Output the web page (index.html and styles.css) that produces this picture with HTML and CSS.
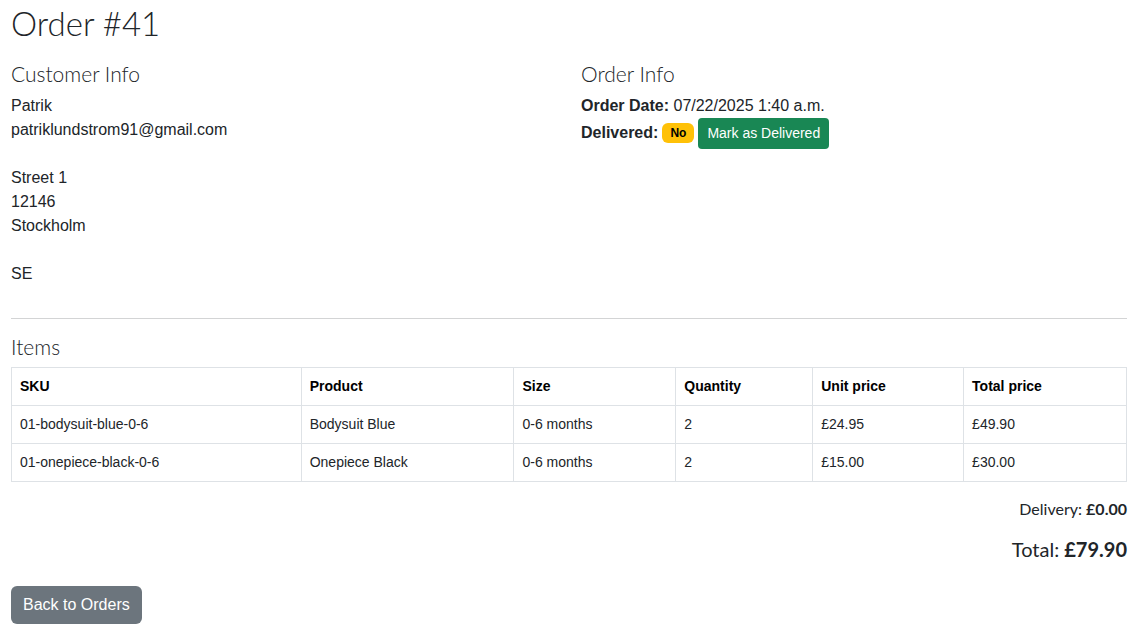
FILE: index.html
```html
<!DOCTYPE html>
<html lang="en">
<head>
<meta charset="utf-8">
<title>Order #41</title>
<link rel="stylesheet" href="styles.css">
</head>
<body>
<main class="page">
  <h1 class="title">Order #41</h1>
  <div class="info-row">
    <section class="info-col">
      <h4 class="sub">Customer Info</h4>
      <p class="block">Patrik<br>patriklundstrom91@gmail.com<br><br>Street 1<br>12146<br>Stockholm<br><br>SE</p>
    </section>
    <section class="info-col">
      <h4 class="sub">Order Info</h4>
      <p class="line"><strong>Order Date:</strong> 07/22/2025 1:40 a.m.</p>
      <p class="line delivered"><strong>Delivered:</strong> <span class="badge">No</span><button class="btn btn-green">Mark as Delivered</button></p>
    </section>
  </div>
  <hr class="rule">
  <h4 class="sub items">Items</h4>
  <table class="items-table">
    <thead>
      <tr><th class="c1">SKU</th><th class="c2">Product</th><th class="c3">Size</th><th class="c4">Quantity</th><th class="c5">Unit price</th><th class="c6">Total price</th></tr>
    </thead>
    <tbody>
      <tr><td>01-bodysuit-blue-0-6</td><td>Bodysuit Blue</td><td>0-6 months</td><td>2</td><td>£24.95</td><td>£49.90</td></tr>
      <tr><td>01-onepiece-black-0-6</td><td>Onepiece Black</td><td>0-6 months</td><td>2</td><td>£15.00</td><td>£30.00</td></tr>
    </tbody>
  </table>
  <p class="delivery">Delivery: <strong>£0.00</strong></p>
  <p class="total">Total: <strong>£79.90</strong></p>
  <button class="btn btn-grey">Back to Orders</button>
</main>
</body>
</html>
```
FILE: styles.css
```css
* { box-sizing: border-box; }
html, body { margin: 0; padding: 0; background: #fff; }
body {
  font-family: "Liberation Sans", Arial, sans-serif;
  font-size: 16px;
  line-height: 1.5;
  color: #212529;
}
.page { padding: 0 6px 0 11px; }
.title {
  font-family: "Lato", "Noto Sans", sans-serif;
  font-weight: 300;
  font-size: 33px;
  line-height: 46px;
  margin: 0 0 13px;
}
.sub {
  font-family: "Lato", "Noto Sans", sans-serif;
  font-weight: 300;
  font-size: 21px;
  line-height: 29px;
  margin: 0 0 6px;
}
.info-row { display: grid; grid-template-columns: 570px 1fr; }
.block { margin: 0 0 16px; }
.line { margin: 0; }
.delivered { display: flex; align-items: center; height: 30px; line-height: 30px; }
.delivered strong { margin-right: 4px; }
.badge {
  display: inline-block;
  background: #ffc107;
  color: #000;
  font-weight: 700;
  font-size: 12px;
  line-height: 20px;
  height: 20px;
  padding: 0 8px;
  border-radius: 6px;
  margin-right: 4px;
}
.btn {
  font-family: "Liberation Sans", Arial, sans-serif;
  border: 0;
  color: #fff;
  cursor: pointer;
}
.btn-green {
  background: #198754;
  font-size: 14px;
  line-height: 21px;
  padding: 5px 9px;
  border-radius: 4px;
}
.rule {
  border: 0;
  border-top: 1px solid #d3d4d5;
  margin: 16px 0 13px;
}
.items { margin-bottom: 6px; }
.items-table {
  width: 1116px;
  border-collapse: collapse;
  font-size: 14px;
  line-height: 21px;
  margin-bottom: 15px;
}
.items-table th, .items-table td {
  border: 1px solid #dee2e6;
  padding: 8px 8px;
  text-align: left;
  height: 38px;
}
.items-table th { font-weight: 700; color: #000; }
.c1 { width: 290px; }
.c2 { width: 213px; }
.c3 { width: 162px; }
.c4 { width: 137px; }
.c5 { width: 151px; }
.c6 { width: 163px; }
.delivery {
  font-family: "Lato", "Noto Sans", sans-serif;
  font-weight: 400;
  text-align: right;
  margin: 0 0 13px;
  font-size: 16px;
  line-height: 24px;
}
.total {
  font-family: "Lato", "Noto Sans", sans-serif;
  font-weight: 400;
  text-align: right;
  margin: 0 0 22px;
  font-size: 20px;
  line-height: 30px;
}
.btn-grey {
  background: #6c757d;
  font-size: 16px;
  line-height: 24px;
  padding: 7px 12px;
  border-radius: 6px;
}
```
